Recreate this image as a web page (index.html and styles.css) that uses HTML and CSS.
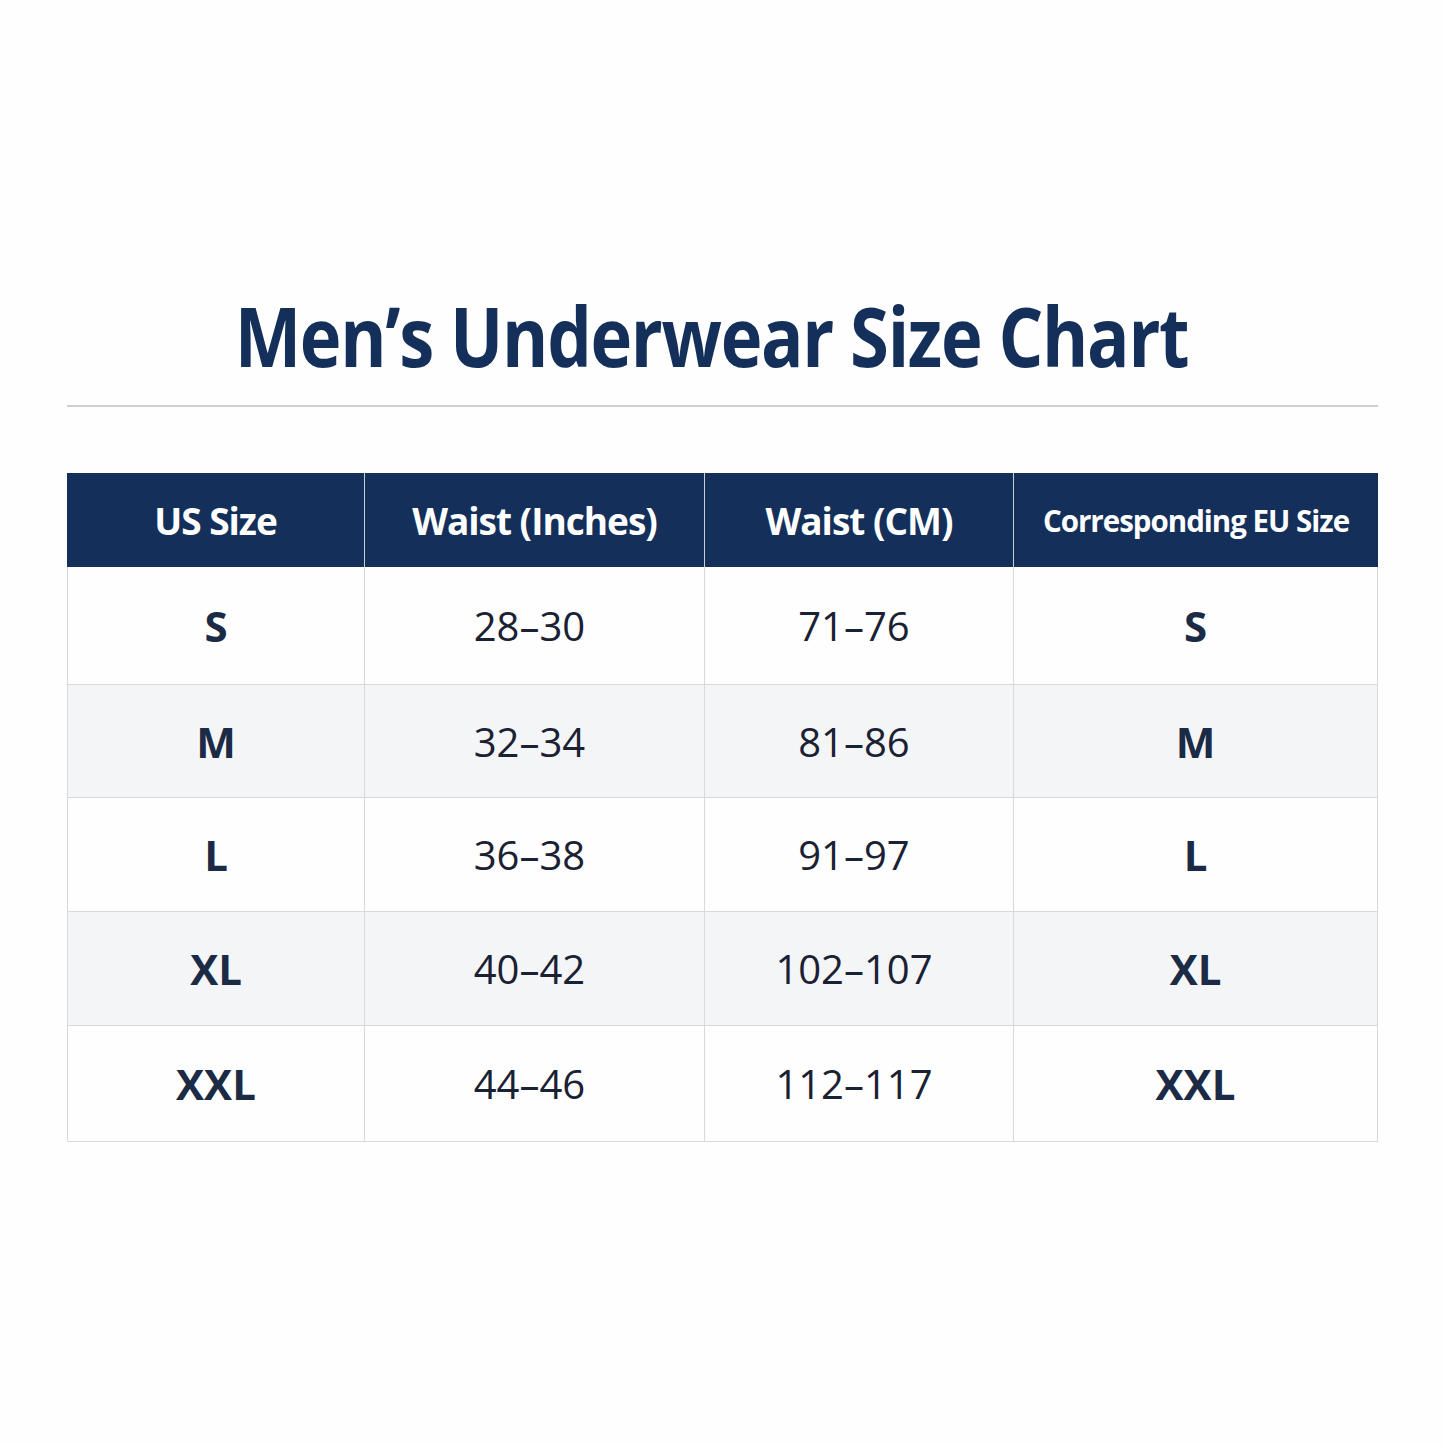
FILE: index.html
```html
<!DOCTYPE html>
<html>
<head>
<meta charset="utf-8">
<link rel="stylesheet" href="styles.css">
</head>
<body>
<div class="page">
  <div class="title-wrap"><h1 class="title">Men’s Underwear Size Chart</h1></div>
  <div class="rule"></div>
  <div class="table">
    <div class="row head">
      <div class="cell">US Size</div>
      <div class="cell">Waist (Inches)</div>
      <div class="cell">Waist (CM)</div>
      <div class="cell small">Corresponding EU Size</div>
    </div>
    <div class="row r1">
      <div class="cell size">S</div><div class="cell num">28–30</div><div class="cell num">71–76</div><div class="cell size">S</div>
    </div>
    <div class="row alt r2">
      <div class="cell size">M</div><div class="cell num">32–34</div><div class="cell num">81–86</div><div class="cell size">M</div>
    </div>
    <div class="row r3">
      <div class="cell size">L</div><div class="cell num">36–38</div><div class="cell num">91–97</div><div class="cell size">L</div>
    </div>
    <div class="row alt r4">
      <div class="cell size">XL</div><div class="cell num">40–42</div><div class="cell num">102–107</div><div class="cell size">XL</div>
    </div>
    <div class="row last">
      <div class="cell size">XXL</div><div class="cell num">44–46</div><div class="cell num">112–117</div><div class="cell size">XXL</div>
    </div>
  </div>
</div>
</body>
</html>
```
FILE: styles.css
```css
html, body {
  margin: 0;
  padding: 0;
  background: #fefefe;
}
body {
  font-family: "Open Sans", "Noto Sans", sans-serif;
  color: #1b2a45;
}
.page {
  width: 1311px;
  margin-left: 67px;
  padding-top: 290px;
}
.title-wrap {
  height: 115px;
  display: flex;
  justify-content: center;
  padding-right: 22px;
}
.title {
  margin: 0;
  font-size: 82px;
  font-weight: 700;
  color: #14305a;
  letter-spacing: -1.5px;
  line-height: 90px;
  white-space: nowrap;
  transform: scaleX(0.86);
}
.rule {
  height: 2px;
  background: #cfcfcf;
}
.table {
  margin-top: 66px;
  display: flex;
  flex-direction: column;
}
.row {
  display: grid;
  grid-template-columns: 297px 340px 309px 365px;
  height: 113px;
  border-bottom: 1px solid #d8d9dc;
}
.row.r1 {
  height: 117px;
}
.row.r2 {
  height: 112px;
}
.row.last {
  height: 115px;
}
.row.head {
  height: 94px;
  background: #14305a;
  border-bottom: none;
}
.row.alt {
  background: #f4f5f7;
}
.cell {
  display: flex;
  align-items: center;
  justify-content: center;
  border-left: 1px solid #d8d9dc;
  font-size: 40px;
}
.cell:last-child {
  border-right: 1px solid #d8d9dc;
}
.head .cell {
  color: #ffffff;
  font-weight: 700;
  font-size: 37px;
  border-left: 1px solid #c9ced8;
  letter-spacing: -1px;
}
.head .cell:first-child {
  border-left: none;
}
.head .cell:last-child {
  border-right: none;
}
.head .cell.small {
  font-size: 29.5px;
}
.size {
  font-weight: 700;
  font-size: 42px;
  color: #1b2a45;
}
.num {
  font-weight: 400;
  color: #1a2133;
  padding-right: 10px;
}
```
